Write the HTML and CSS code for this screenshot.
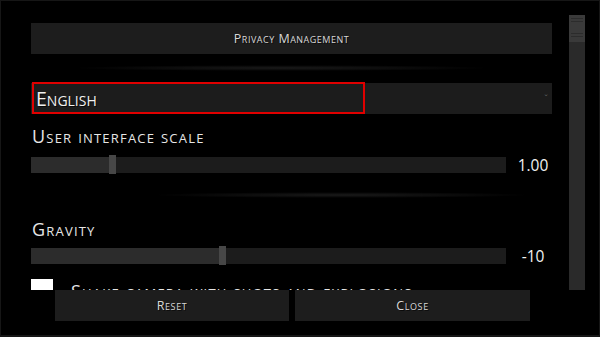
FILE: index.html
```html
<!DOCTYPE html>
<html lang="en">
<head>
  <meta charset="UTF-8">
  <title>Settings</title>
  <link rel="stylesheet" href="styles.css">
</head>
<body>
  <div class="screen">
    <div class="pane">
      <div class="settings">
        <button class="wide-button">Privacy Management</button>
        <div class="glow glow--top"></div>

        <div class="select">
          <span class="select__value">English</span>
          <span class="select__arrow">&#711;</span>
          <div class="select__focus"></div>
        </div>

        <div class="setting">
          <div class="setting__label">User interface scale</div>
          <div class="slider">
            <div class="slider__track">
              <div class="slider__fill" style="width: 78px"></div>
              <div class="slider__thumb"></div>
            </div>
            <div class="slider__value">1.00</div>
          </div>
        </div>

        <div class="glow glow--mid"></div>

        <div class="setting setting--gravity">
          <div class="setting__label">Gravity</div>
          <div class="slider">
            <div class="slider__track">
              <div class="slider__fill" style="width: 188px"></div>
              <div class="slider__thumb"></div>
            </div>
            <div class="slider__value">-10</div>
          </div>
        </div>

        <div class="check">
          <div class="check__box"></div>
          <div class="check__label">Shake camera with shots and explosions</div>
        </div>
      </div>

      <div class="scrollbar">
        <div class="scrollbar__thumb">
          <div class="grip"></div>
          <div class="grip"></div>
        </div>
      </div>
    </div>

    <div class="footer">
      <button class="footer__button footer__button--reset">Reset</button>
      <button class="footer__button footer__button--close">Close</button>
    </div>
  </div>
</body>
</html>
```

FILE: styles.css
```css
html {
  box-sizing: border-box;
  background: #000;
}

*, *:before, *:after {
  box-sizing: inherit;
}

body {
  margin: 0;
  font-family: 'Open Sans', 'DejaVu Sans', sans-serif;
  color: #e6e6e6;
}

.screen {
  width: 600px;
  height: 337px;
  border: 1px solid #161616;
  border-bottom-width: 2px;
  display: flex;
  flex-direction: column;
  background: #000;
}

.pane {
  height: 289px;
  display: flex;
  overflow: hidden;
}

.settings {
  width: 521px;
  margin-left: 30px;
  padding-top: 22px;
}

.wide-button {
  display: block;
  width: 100%;
  height: 31px;
  border: 0;
  background: #1d1d1d;
  color: #d8d8d8;
  font-family: inherit;
  font-size: 12.5px;
  letter-spacing: 0.5px;
  font-variant: small-caps;
  padding: 0;
  text-shadow: 1px 1px 0 rgba(0,0,0,0.6);
}

.glow {
  height: 6px;
  background: radial-gradient(ellipse at center, rgba(255,255,255,0.1) 0%, rgba(255,255,255,0.04) 45%, rgba(255,255,255,0) 70%);
}

.glow--top {
  margin: 11px 60px 12px 40px;
}

.glow--mid {
  margin: 19px 20px 20px 120px;
}

.select {
  position: relative;
  height: 31px;
  background: #1c1c1c;
  display: flex;
  align-items: center;
  padding: 0 4px 0 5px;
}

.select__value {
  flex: 1;
  font-size: 19.5px;
  font-variant: small-caps;
  color: #f0f0f0;
  text-shadow: 1px 1px 0 rgba(0,0,0,0.7);
}

.select__arrow {
  color: #666;
  font-size: 9px;
  line-height: 1;
}

.select__focus {
  position: absolute;
  left: 1px;
  top: -1px;
  width: 333px;
  height: 32px;
  border: 2px solid #e00000;
}

.setting__label {
  font-size: 18px;
  line-height: 22px;
  letter-spacing: 1.2px;
  font-variant: small-caps;
  margin: 11px 0 10px 1px;
  text-shadow: 1px 1px 0 rgba(0,0,0,0.7);
}

.setting--gravity .setting__label {
  margin-top: 0;
  margin-bottom: 8px;
}

.slider {
  display: flex;
  align-items: center;
  height: 16px;
}

.slider__track {
  position: relative;
  width: 475px;
  height: 16px;
  background: #1c1c1c;
  display: flex;
}

.slider__fill {
  height: 100%;
  background: #2c2c2c;
}

.slider__thumb {
  width: 7px;
  height: 19px;
  margin-top: -2px;
  background: #474747;
}

.slider__value {
  width: 38px;
  margin-left: 8px;
  text-align: center;
  font-size: 15.5px;
  color: #f2f2f2;
}

.check {
  display: flex;
  align-items: flex-start;
  margin-top: 15px;
}

.check__box {
  width: 22px;
  height: 12px;
  background: #fff;
}

.check__label {
  margin: 0 0 0 18px;
  font-size: 18px;
  line-height: 22px;
  letter-spacing: 1.2px;
  font-variant: small-caps;
  margin-top: 1px;
}

.scrollbar {
  width: 16px;
  margin: 14px 0 0 17px;
  background: #2a2a2a;
}

.scrollbar__thumb {
  height: 27px;
  background: #3a3a3a;
  padding-top: 3px;
}

.grip {
  height: 4px;
  margin: 0 2px 11px 2px;
  border-top: 1px solid #2c2c2c;
  border-bottom: 1px solid #2c2c2c;
}

.footer {
  display: flex;
  gap: 6px;
  padding-left: 54px;
}

.footer__button {
  height: 31px;
  border: 0;
  padding: 0;
  background: #1d1d1d;
  color: #d8d8d8;
  font-family: inherit;
  font-size: 12.5px;
  letter-spacing: 0.6px;
  font-variant: small-caps;
  text-shadow: 1px 1px 0 rgba(0,0,0,0.6);
}

.footer__button--reset {
  width: 234px;
}

.footer__button--close {
  width: 235px;
}
```
